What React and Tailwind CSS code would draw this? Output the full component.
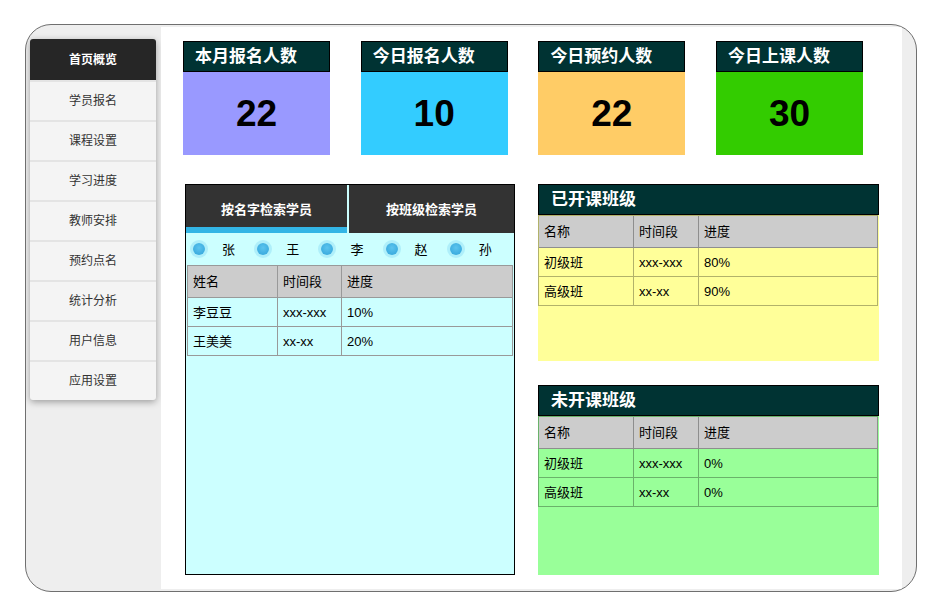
import React from "react";

const FONT = "font-['Liberation_Sans','Noto_Sans_CJK_SC',sans-serif]";

const menu = ["首页概览", "学员报名", "课程设置", "学习进度", "教师安排", "预约点名", "统计分析", "用户信息", "应用设置"];

function Stat({ title, value, bg }) {
  return (
    <div className="w-[147px] flex flex-col">
      <div className="h-[31px] bg-[#003333] border border-black flex items-center pl-[11px] text-white font-bold text-[17px] leading-none">
        {title}
      </div>
      <div className={`h-[83px] ${bg} flex items-center justify-center text-[37px] font-bold text-black leading-none`}>
        {value}
      </div>
    </div>
  );
}

function Row({ cells, widths, h, extra, border }) {
  return (
    <div className={`flex ${h} border-b ${border} ${extra}`}>
      {cells.map((c, i) => (
        <div key={i} className={`${widths[i]} border-r ${border} flex items-center pl-[5px] text-[13px] text-black leading-none`}>
          {c}
        </div>
      ))}
    </div>
  );
}

function Table({ header, rows, widths, border, width }) {
  return (
    <div className={`${width} flex flex-col border-l border-t ${border}`}>
      <Row cells={header} widths={widths} h="h-[32px]" extra="bg-[#cccccc]" border={border} />
      {rows.map((r, i) => (
        <Row key={i} cells={r} widths={widths} h="h-[29px]" extra="" border={border} />
      ))}
    </div>
  );
}

function ClassPanel({ title, bg, h, rows }) {
  return (
    <div className={`w-[341px] ${h} ${bg} flex flex-col`}>
      <div className="h-[31px] bg-[#003333] border border-black flex items-center pl-[12px] text-white font-bold text-[17px] leading-none">
        {title}
      </div>
      <Table
        header={["名称", "时间段", "进度"]}
        rows={rows}
        widths={["w-[95px]", "w-[65px]", "w-[179px]"]}
        border="border-black/30"
        width="w-[340px]"
      />
    </div>
  );
}

export default function App() {
  return (
    <div className={`w-[941px] h-[611px] bg-white overflow-hidden ${FONT}`}>
      <div className="ml-[25px] mt-[24px] w-[892px] h-[568px] border border-[#6f6f6f] rounded-[26px] bg-[#eeeeee] flex overflow-hidden">
        {/* sidebar column */}
        <div className="w-[135px] pl-[4px] pt-[14px] shrink-0">
          <div className="w-[126px] bg-[#f4f4f4] rounded-[3px] overflow-hidden shadow-[0_2px_7px_rgba(0,0,0,0.35)]">
            {menu.map((m, i) => (
              <div
                key={m}
                className={
                  i === 0
                    ? "h-[41px] bg-[#262626] text-white font-semibold text-[12px] flex items-center justify-center"
                    : "h-[40px] text-[#333] text-[12px] flex items-center justify-center border-t-2 border-[#e4e4e4]"
                }
              >
                {m}
              </div>
            ))}
          </div>
        </div>

        {/* main content */}
        <div className="w-[741px] mt-[2px] mb-[2px] bg-white shrink-0 pl-[22px] pt-[14px] flex flex-col">
          <div className="flex gap-[30.7px]">
            <Stat title="本月报名人数" value="22" bg="bg-[#9999ff]" />
            <Stat title="今日报名人数" value="10" bg="bg-[#33ccff]" />
            <Stat title="今日预约人数" value="22" bg="bg-[#ffcc66]" />
            <Stat title="今日上课人数" value="30" bg="bg-[#33cc00]" />
          </div>

          <div className="flex mt-[29px]">
            {/* left search panel */}
            <div className="ml-[2px] w-[330px] h-[391px] border border-black bg-[#ccffff] flex flex-col">
              <div className="flex h-[48px]">
                <div className="w-[161px] bg-[#333333] pt-[6px] border-b-[6px] border-[#33b5e5] text-white font-bold text-[13px] flex items-center justify-center leading-none">
                  按名字检索学员
                </div>
                <div className="w-[2px]" />
                <div className="flex-1 bg-[#333333] text-white font-bold text-[13px] flex items-center justify-center leading-none">
                  按班级检索学员
                </div>
              </div>
              <div className="h-[32px] flex items-center pl-[7px]">
                {["张", "王", "李", "赵", "孙"].map((n) => (
                  <div key={n} className="w-[64.5px] flex items-center">
                    <div className="w-[12px] h-[12px] rounded-full bg-[radial-gradient(circle_at_50%_40%,#5cc4ee,#2fa3d9)] shadow-[0_0_0_3px_rgba(120,210,240,0.35)]" />
                    <div className="ml-[17px] text-[13px] text-black leading-none">{n}</div>
                  </div>
                ))}
              </div>
              <div className="ml-[1px]">
                <Table
                  header={["姓名", "时间段", "进度"]}
                  rows={[
                    ["李豆豆", "xxx-xxx", "10%"],
                    ["王美美", "xx-xx", "20%"],
                  ]}
                  widths={["w-[90px]", "w-[64px]", "w-[171px]"]}
                  border="border-[#999999]"
                  width="w-[326px]"
                />
              </div>
            </div>

            {/* right panels */}
            <div className="ml-[23px] flex flex-col gap-[24px]">
              <ClassPanel
                title="已开课班级"
                bg="bg-[#ffff99]"
                h="h-[177px]"
                rows={[
                  ["初级班", "xxx-xxx", "80%"],
                  ["高级班", "xx-xx", "90%"],
                ]}
              />
              <ClassPanel
                title="未开课班级"
                bg="bg-[#99ff99]"
                h="h-[190px]"
                rows={[
                  ["初级班", "xxx-xxx", "0%"],
                  ["高级班", "xx-xx", "0%"],
                ]}
              />
            </div>
          </div>
        </div>
      </div>
    </div>
  );
}
